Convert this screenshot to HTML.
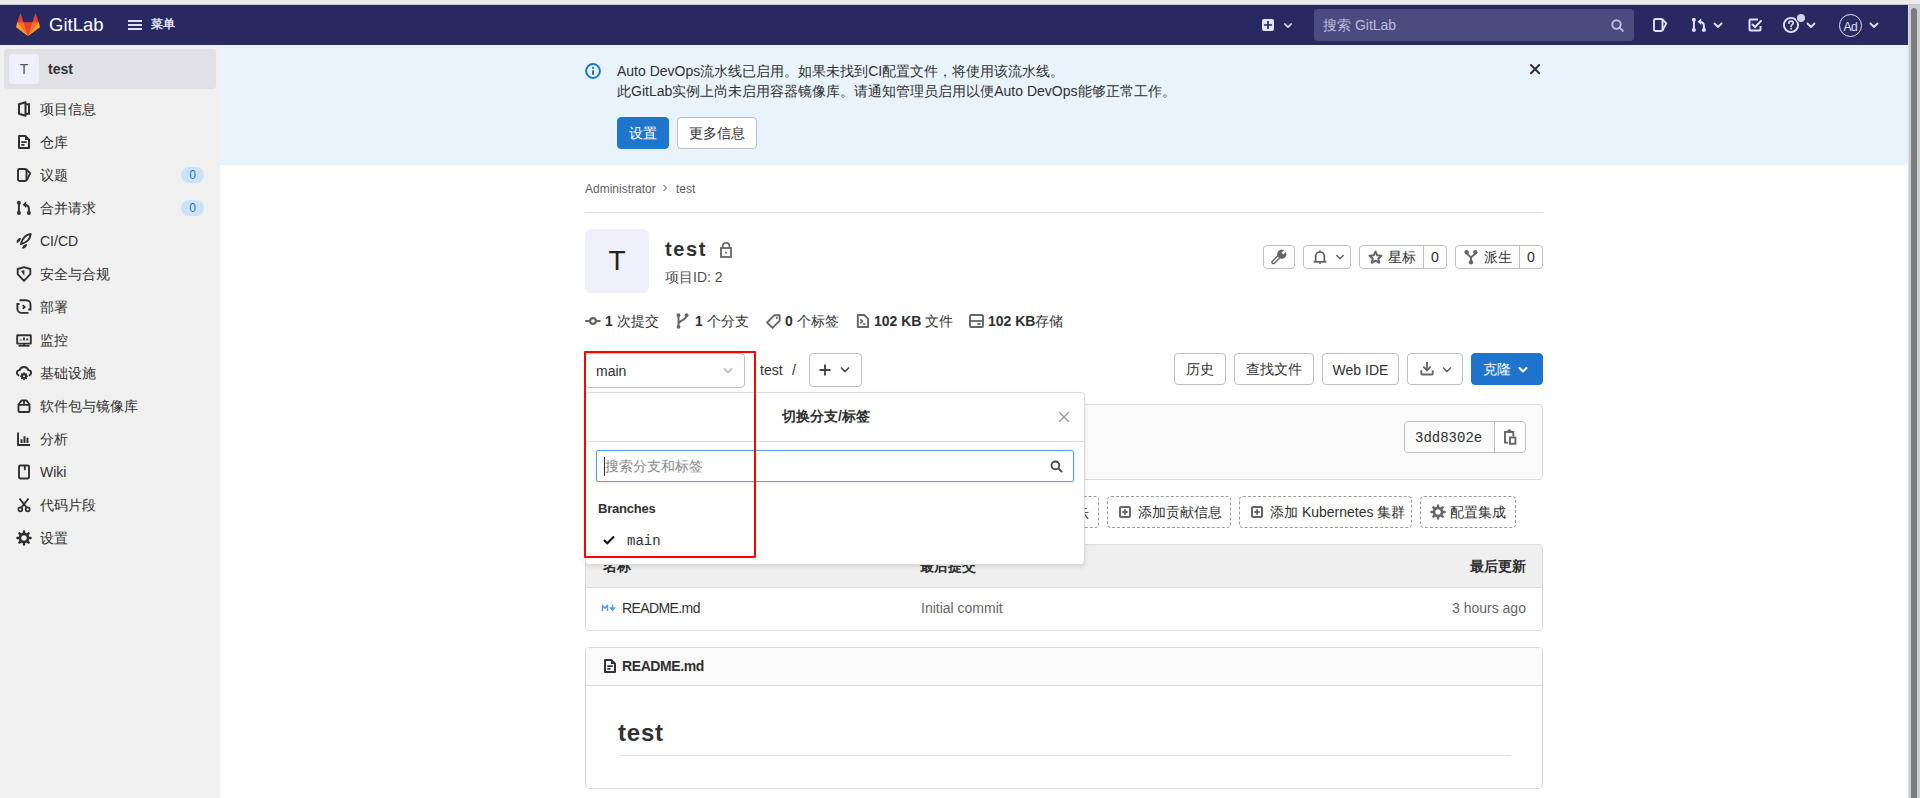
<!DOCTYPE html>
<html><head><meta charset="utf-8">
<style>
*{box-sizing:border-box;margin:0;padding:0}
html,body{width:1920px;height:798px;overflow:hidden;background:#fff}
body{font-family:"Liberation Sans",sans-serif;font-size:14px;color:#303030;position:relative}
.abs{position:absolute}
svg{display:block}
#topstrip{left:0;top:0;width:1920px;height:5px;background:linear-gradient(#ebebe9 0,#ebebe9 3px,#f0f0ee 3px,#f0f0ee 4px,#c8c7c2 4px,#c8c7c2 5px)}
#nav{left:0;top:5px;width:1908px;height:40px;background:#292961}
#scroll{left:1908px;top:4px;width:12px;height:794px;background:#cdd0cf;border-left:1px solid #dcdedd;border-top:1px solid #c4c6c5}
#thumb{left:1911px;top:8px;width:6px;height:800px;background:#7a7e7e;border-radius:3px}
#side{left:0;top:45px;width:220px;height:753px;background:#f0f0f0}
#alert{left:220px;top:45px;width:1688px;height:120px;background:#e9f3fc}
.btn{position:absolute;padding-top:2px;height:32px;border:1px solid #bfbfbf;border-radius:4px;background:#fff;display:flex;align-items:center;justify-content:center;color:#303030;font-size:14px}
.side-item{position:absolute;left:16px;height:20px;display:flex;align-items:center;color:#303030;font-size:14px}
.side-item svg{margin-right:8px}
.badge{position:absolute;left:181px;width:23px;height:16px;border-radius:8px;background:#cbe2f9;color:#1f75cb;font-size:12px;display:flex;align-items:center;justify-content:center}
</style></head><body>
<div id="topstrip" class="abs"></div>
<div id="nav" class="abs"></div>
<!-- NAV -->
<svg class="abs" style="left:16px;top:12.7px" width="24" height="24" viewBox="0 0 36 36">
<path fill="#e24329" d="M2 14l9.38 9v-9l-4-12.28c-.205-.632-1.176-.632-1.38 0z"/>
<path fill="#e24329" d="M34 14l-9.38 9v-9l4-12.28c.205-.632 1.176-.632 1.38 0z"/>
<path fill="#e24329" d="M18,34.38 3,14 33,14 Z"/>
<path fill="#fc6d26" d="M18,34.38 11.38,14 2,14 6,25Z"/>
<path fill="#fc6d26" d="M18,34.38 24.62,14 34,14 30,25Z"/>
<path fill="#fca326" d="M2 14L.1 20.16c-.18.565 0 1.2.5 1.56l17.42 12.66z"/>
<path fill="#fca326" d="M34 14l1.9 6.16c.18.565 0 1.2-.5 1.56L18 34.38z"/>
</svg>
<div class="abs" style="left:49px;top:13.5px;color:#fff;font-size:18.5px;line-height:22px">GitLab</div>
<svg class="abs" style="left:128px;top:20px" width="14" height="10" viewBox="0 0 14 10"><rect x="0" y="0" width="14" height="2" fill="#e1e1f5"/><rect x="0" y="4" width="14" height="2" fill="#e1e1f5"/><rect x="0" y="8" width="14" height="2" fill="#e1e1f5"/></svg>
<div class="abs" style="left:151px;top:15px;color:#e1e1f5;font-size:12px;font-weight:bold;line-height:18px">菜单</div>
<!-- nav right -->
<svg class="abs" style="left:1262px;top:19px" width="12" height="12" viewBox="0 0 12 12"><rect x="0" y="0" width="12" height="12" rx="2" fill="#e1e1f5"/><path d="M6 2v8M2 6h8" stroke="#292961" stroke-width="1.7"/></svg>
<svg class="abs nchev" style="left:1283px;top:21px" width="10" height="8" viewBox="0 0 10 8"><path d="M1.8 3L5 6.1 8.2 3" stroke="#e1e1f5" stroke-width="1.7" fill="none" stroke-linecap="round" stroke-linejoin="round"/></svg>
<div class="abs" style="left:1314px;top:9px;width:320px;height:32px;border-radius:4px;background:#4b4b80"></div>
<div class="abs" style="left:1323px;top:16px;color:#bcbcdc;font-size:14px;line-height:18px">搜索 GitLab</div>
<svg class="abs" style="left:1611px;top:18.5px" width="13" height="13" viewBox="0 0 13 13"><circle cx="5.5" cy="5.5" r="4.2" stroke="#bcbcdc" stroke-width="2" fill="none"/><path d="M8.6 8.6L11.8 11.8" stroke="#bcbcdc" stroke-width="2" stroke-linecap="round"/></svg>
<!-- issues -->
<svg class="abs" style="left:1652px;top:17px" width="16" height="16" viewBox="0 0 16 16" fill="none" stroke="#e1e1f5"><rect x="2" y="2" width="8.5" height="12" rx="1.5" stroke-width="1.9"/><path d="M10.5 2.5L14.3 6.4 10.5 13.5" stroke-width="1.8" stroke-linejoin="round"/></svg>
<!-- MR -->
<svg class="abs" style="left:1691px;top:17px" width="16" height="16" viewBox="0 0 16 16" fill="none" stroke="#e1e1f5" stroke-width="2"><path d="M2.9 3v10"/><path d="M12.9 13V8.6c0-2.1-1.5-3.7-3.6-3.7H8.5"/><path d="M10.2 1.3L6.6 4.7l3.6 3.3z" fill="#e1e1f5" stroke="none"/><circle cx="2.9" cy="2.8" r="2" fill="#e1e1f5" stroke="none"/><circle cx="2.9" cy="12.9" r="2" fill="#e1e1f5" stroke="none"/><circle cx="12.9" cy="12.9" r="2" fill="#e1e1f5" stroke="none"/></svg>
<svg class="abs" style="left:1713px;top:21px" width="10" height="8" viewBox="0 0 10 8"><path d="M1.5 2.5L5 6l3.5-3.5" stroke="#e1e1f5" stroke-width="1.8" fill="none" stroke-linecap="round" stroke-linejoin="round"/></svg>
<!-- todo -->
<svg class="abs" style="left:1747px;top:17px" width="16" height="16" viewBox="0 0 16 16"><path d="M11 2.5H3.5c-.6 0-1 .4-1 1v9c0 .6.4 1 1 1h9c.6 0 1-.4 1-1V9" fill="none" stroke="#e1e1f5" stroke-width="2"/><path d="M5.5 7.5L8 10l6-6" fill="none" stroke="#e1e1f5" stroke-width="2" stroke-linecap="round"/></svg>
<!-- help -->
<svg class="abs" style="left:1782px;top:16px;overflow:visible" width="20" height="20" viewBox="0 0 20 20"><circle cx="9" cy="9" r="7.1" fill="none" stroke="#e1e1f5" stroke-width="1.9"/><path d="M6.9 7.2c0-1.2 1-2.1 2.2-2.1s2.1.9 2.1 2c0 1.5-2.1 1.6-2.1 3.2" fill="none" stroke="#e1e1f5" stroke-width="1.7" stroke-linecap="round"/><circle cx="9.1" cy="12.8" r="1" fill="#e1e1f5"/><circle cx="19" cy="2" r="5" fill="#292961"/><circle cx="19" cy="2" r="4" fill="#d2d2f0"/></svg>
<svg class="abs" style="left:1806px;top:21px" width="10" height="8" viewBox="0 0 10 8"><path d="M1.5 2.5L5 6l3.5-3.5" stroke="#e1e1f5" stroke-width="1.8" fill="none" stroke-linecap="round" stroke-linejoin="round"/></svg>
<!-- avatar -->
<div class="abs" style="left:1838.5px;top:13.5px;width:23.5px;height:23.5px;border-radius:50%;border:1px solid #e1e1f5;color:#e1e1f5;font-size:12px;line-height:24px;text-align:center;letter-spacing:-0.5px">Ad</div>
<svg class="abs" style="left:1869px;top:21px" width="10" height="8" viewBox="0 0 10 8"><path d="M1.5 2.5L5 6l3.5-3.5" stroke="#e1e1f5" stroke-width="1.8" fill="none" stroke-linecap="round" stroke-linejoin="round"/></svg>
<div id="side" class="abs"></div>
<!-- SIDEBAR -->
<div class="abs" style="left:4px;top:49px;width:212px;height:40px;border-radius:4px;background:#e0e0e5"></div>
<div class="abs" style="left:9px;top:54px;width:30px;height:30px;border-radius:4px;background:#f0f0fd;color:#555;font-size:14px;line-height:30px;text-align:center">T</div>
<div class="abs" style="left:48px;top:60px;font-weight:bold;font-size:14px;line-height:18px;color:#303030">test</div>
<svg class="abs" style="left:16px;top:101px" width="16" height="16" viewBox="0 0 16 16" fill="none" stroke="#303030" stroke-width="2"><path d="M3 3.2L9.5 1.3v13.4L3 12.8z" stroke-linejoin="round"/><path d="M10 3.3h3v9.4h-3"/></svg>
<div class="abs" style="left:40px;top:99px;line-height:20px;font-size:14px;color:#303030">项目信息</div>
<svg class="abs" style="left:16px;top:134px" width="16" height="16" viewBox="0 0 16 16" fill="none" stroke="#303030" stroke-width="2"><path d="M3 2h6.3L13 5.7V14H3z" stroke-linejoin="round"/><path d="M5.3 8.2h5.4M5.3 10.8h3.2" stroke-width="1.7"/><path d="M9 1.5L13.5 6H9z" fill="#303030" stroke="none"/></svg>
<div class="abs" style="left:40px;top:132px;line-height:20px;font-size:14px;color:#303030">仓库</div>
<svg class="abs" style="left:16px;top:167px" width="16" height="16" viewBox="0 0 16 16" fill="none" stroke="#303030" stroke-width="2"><rect x="2" y="2" width="8.5" height="12" rx="1.5" stroke-width="1.9"/><path d="M10.5 2.5L14.3 6.4 10.5 13.5" stroke-width="1.8" stroke-linejoin="round"/></svg>
<div class="abs" style="left:40px;top:165px;line-height:20px;font-size:14px;color:#303030">议题</div>
<svg class="abs" style="left:16px;top:200px" width="16" height="16" viewBox="0 0 16 16" fill="none" stroke="#303030" stroke-width="2"><path d="M2.9 3v10"/><path d="M12.9 13V8.6c0-2.1-1.5-3.7-3.6-3.7H8.5"/><path d="M10.2 1.3L6.6 4.7l3.6 3.3z" fill="#303030" stroke="none"/><circle cx="2.9" cy="2.8" r="2" fill="#303030" stroke="none"/><circle cx="2.9" cy="12.9" r="2" fill="#303030" stroke="none"/><circle cx="12.9" cy="12.9" r="2" fill="#303030" stroke="none"/></svg>
<div class="abs" style="left:40px;top:198px;line-height:20px;font-size:14px;color:#303030">合并请求</div>
<svg class="abs" style="left:16px;top:233px" width="16" height="16" viewBox="0 0 16 16" fill="none" stroke="#303030" stroke-width="2"><path d="M14.7 1C10.5 1.4 6.6 4.8 4.7 11.2 11 9.4 14.4 5.6 14.7 1z" stroke-width="1.9" stroke-linejoin="round"/><path d="M1.2 9.3C1.3 7.6 2.6 6 4.3 5.6 3.9 7.2 2.9 8.7 1.2 9.3z" fill="#303030" stroke-width="1.3" stroke-linejoin="round"/><path d="M6.7 15C8.4 14.9 10 13.6 10.4 11.7 8.8 12.1 7.3 13.3 6.7 15z" fill="#303030" stroke-width="1.3" stroke-linejoin="round"/></svg>
<div class="abs" style="left:40px;top:231px;line-height:20px;font-size:14px;color:#303030">CI/CD</div>
<svg class="abs" style="left:16px;top:266px" width="16" height="16" viewBox="0 0 16 16" fill="none" stroke="#303030" stroke-width="2"><path d="M8 1.1L14.3 3V8.2L8 14.9 1.7 8.2V3z" stroke-width="1.9" stroke-linejoin="round"/><path d="M5 4.9L8.4 4v6z" fill="#303030" stroke="none"/></svg>
<div class="abs" style="left:40px;top:264px;line-height:20px;font-size:14px;color:#303030">安全与合规</div>
<svg class="abs" style="left:16px;top:299px" width="16" height="16" viewBox="0 0 16 16" fill="none" stroke="#303030" stroke-width="2"><path d="M3.5 1.3H10.3C12.6 1.3 14.5 3.2 14.5 5.5V10.5H12.3" stroke-width="1.9"/><path d="M3.6 5H1.4V9.7C1.4 12 3.3 13.9 5.6 13.9H12.5" stroke-width="1.9"/><path d="M6.7 6.2L8.7 8 6.7 9.8" stroke-width="1.8"/></svg>
<div class="abs" style="left:40px;top:297px;line-height:20px;font-size:14px;color:#303030">部署</div>
<svg class="abs" style="left:16px;top:332px" width="16" height="16" viewBox="0 0 16 16" fill="none" stroke="#303030" stroke-width="2"><rect x="1.2" y="3.2" width="13.6" height="8.4" rx="0.3" stroke-width="1.9"/><path d="M2.5 13.8h11" stroke-width="1.7"/><path d="M8 11.5v2" stroke-width="1.5"/><path d="M4.7 8.6V7.4M8 8.6V5.5M11.2 8.6V6.5" stroke-width="1.8"/></svg>
<div class="abs" style="left:40px;top:330px;line-height:20px;font-size:14px;color:#303030">监控</div>
<svg class="abs" style="left:16px;top:365px" width="16" height="16" viewBox="0 0 16 16" fill="none" stroke="#303030" stroke-width="2"><path transform="translate(8 0) scale(1.08 1) translate(-8 1)" d="M3.6 9.6C2.4 9.2 1.4 8.2 1.4 6.9c0-1.5 1.1-2.6 2.5-2.7C4.5 2.3 6.1 1 8 1s3.5 1.3 4.1 3.2c1.4.1 2.5 1.2 2.5 2.7 0 1.3-1 2.3-2.2 2.7" stroke-width="1.8"/><path d="M10.00 11.20L11.10 11.20M9.41 12.61L10.19 13.39M8.00 13.20L8.00 14.30M6.59 12.61L5.81 13.39M6.00 11.20L4.90 11.20M6.59 9.79L5.81 9.01M8.00 9.20L8.00 8.10M9.41 9.79L10.19 9.01" stroke-width="1.7" stroke-linecap="round"/><circle cx="8" cy="11.2" r="2" stroke-width="1.9"/></svg>
<div class="abs" style="left:40px;top:363px;line-height:20px;font-size:14px;color:#303030">基础设施</div>
<svg class="abs" style="left:16px;top:398px" width="16" height="16" viewBox="0 0 16 16" fill="none" stroke="#303030" stroke-width="2"><path d="M2.5 6.5L5.5 2.5h5l3 4V13c0 .6-.4 1-1 1h-9c-.6 0-1-.4-1-1z" stroke-width="1.9" stroke-linejoin="round"/><path d="M2.5 6.8h11M8 2.5v4.3" stroke-width="1.8"/></svg>
<div class="abs" style="left:40px;top:396px;line-height:20px;font-size:14px;color:#303030">软件包与镜像库</div>
<svg class="abs" style="left:16px;top:431px" width="16" height="16" viewBox="0 0 16 16" fill="none" stroke="#303030" stroke-width="2"><path d="M2 1.5V14h12" stroke-width="1.9"/><path d="M5.5 12V8.2M8.5 12V5.2M11.5 12V6.8" stroke-width="2"/></svg>
<div class="abs" style="left:40px;top:429px;line-height:20px;font-size:14px;color:#303030">分析</div>
<svg class="abs" style="left:16px;top:464px" width="16" height="16" viewBox="0 0 16 16" fill="none" stroke="#303030" stroke-width="2"><rect x="3" y="1.5" width="10" height="13" rx="1.2" stroke-width="1.9"/><path d="M8.8 2v4.2" stroke-width="1.8"/></svg>
<div class="abs" style="left:40px;top:462px;line-height:20px;font-size:14px;color:#303030">Wiki</div>
<svg class="abs" style="left:16px;top:497px" width="16" height="16" viewBox="0 0 16 16" fill="none" stroke="#303030" stroke-width="2"><circle cx="4.3" cy="12.3" r="2" stroke-width="1.7"/><circle cx="11.7" cy="12.3" r="2" stroke-width="1.7"/><path d="M5.3 10.6L12.5 1.5M10.7 10.6L3.5 1.5" stroke-width="1.8"/></svg>
<div class="abs" style="left:40px;top:495px;line-height:20px;font-size:14px;color:#303030">代码片段</div>
<svg class="abs" style="left:16px;top:530px" width="16" height="16" viewBox="0 0 16 16"><path d="M12.00 8.00L14.60 8.00M10.83 10.83L12.67 12.67M8.00 12.00L8.00 14.60M5.17 10.83L3.33 12.67M4.00 8.00L1.40 8.00M5.17 5.17L3.33 3.33M8.00 4.00L8.00 1.40M10.83 5.17L12.67 3.33" stroke="#303030" stroke-width="2.4" stroke-linecap="round"/><circle cx="8" cy="8" r="4.1" fill="none" stroke="#303030" stroke-width="2.6"/></svg>
<div class="abs" style="left:40px;top:528px;line-height:20px;font-size:14px;color:#303030">设置</div>
<div class="badge" style="top:167px">0</div>
<div class="badge" style="top:200px">0</div>

<div id="alert" class="abs"></div>
<!-- ALERT -->
<svg class="abs" style="left:585px;top:63px" width="16" height="16" viewBox="0 0 16 16"><circle cx="8" cy="8" r="6.9" fill="none" stroke="#1f75cb" stroke-width="2"/><circle cx="8" cy="4.9" r="1.1" fill="#1f75cb"/><path d="M8 7.2v4.6" stroke="#1f75cb" stroke-width="2"/></svg>
<div class="abs" style="left:617px;top:61px;line-height:20px;font-size:14px;color:#303030">Auto DevOps流水线已启用。如果未找到CI配置文件，将使用该流水线。<br>此GitLab实例上尚未启用容器镜像库。请通知管理员启用以便Auto DevOps能够正常工作。</div>
<div class="btn" style="left:617px;top:117px;width:52px;background:#1f75cb;border-color:#1f75cb;color:#fff">设置</div>
<div class="btn" style="left:677px;top:117px;width:80px">更多信息</div>
<svg class="abs" style="left:1529px;top:63px" width="12" height="12" viewBox="0 0 12 12"><path d="M2 2l8.2 8.2M10.2 2l-8.2 8.2" stroke="#303030" stroke-width="2" stroke-linecap="round"/></svg>

<!-- MAIN HEADER -->
<div class="abs" style="left:585px;top:181px;font-size:12px;line-height:16px;color:#5f5f5f">Administrator</div>
<svg class="abs" style="left:662px;top:184px" width="6" height="8" viewBox="0 0 6 8"><path d="M1.5 1l3 3-3 3" stroke="#888" stroke-width="1.1" fill="none"/></svg>
<div class="abs" style="left:676px;top:181px;font-size:12px;line-height:16px;color:#5f5f5f">test</div>
<div class="abs" style="left:585px;top:212px;width:958px;height:1px;background:#dcdcdc"></div>
<div class="abs" style="left:585px;top:229px;width:64px;height:64px;border-radius:6px;background:#f0f0fd;color:#222;font-size:28px;line-height:64px;text-align:center">T</div>
<div class="abs" style="left:665px;top:237px;font-size:20px;line-height:24px;font-weight:bold;color:#303030;letter-spacing:1.6px">test</div>
<svg class="abs" style="left:720px;top:242px" width="12" height="16" viewBox="0 0 12 16"><path d="M2.6 6V4.2C2.6 2.3 4.1.9 6 .9s3.4 1.4 3.4 3.3V6" fill="none" stroke="#666" stroke-width="1.7"/><rect x="1" y="6" width="10" height="9" fill="none" stroke="#666" stroke-width="1.8"/><circle cx="6" cy="10.5" r="1" fill="#666"/></svg>
<div class="abs" style="left:665px;top:268px;font-size:14px;line-height:18px;color:#4f4f4f">项目ID: 2</div>
<!-- stats -->
<svg class="abs" style="left:585px;top:313px" width="16" height="16" viewBox="0 0 16 16"><circle cx="8" cy="8" r="2.9" fill="none" stroke="#666" stroke-width="2.2"/><path d="M0.2 8h4.8M11 8h4.6" stroke="#666" stroke-width="2.2"/></svg>
<div class="abs" style="left:605px;top:312px;font-size:14px;line-height:18px;color:#303030"><b>1</b> 次提交</div>
<svg class="abs" style="left:676px;top:313px" width="14" height="16" viewBox="0 0 14 16"><g fill="#666"><circle cx="2.5" cy="2.2" r="1.9"/><circle cx="2.5" cy="13.8" r="1.9"/><circle cx="10.6" cy="2.2" r="1.9"/></g><path d="M2.5 2.2v11.6M2.5 11c0-4 8.1-3.5 8.1-8.8" stroke="#666" stroke-width="1.9" fill="none"/></svg>
<div class="abs" style="left:695px;top:312px;font-size:14px;line-height:18px;color:#303030"><b>1</b> 个分支</div>
<svg class="abs" style="left:766px;top:314px" width="15" height="15" viewBox="0 0 15 15"><path d="M8.3 1.3h5c.2 0 .4.2.4.4v5L6.5 13.9 1.1 8.5z" fill="none" stroke="#666" stroke-width="1.9" stroke-linejoin="round"/><circle cx="10.9" cy="4.1" r="1.1" fill="#666"/></svg>
<div class="abs" style="left:785px;top:312px;font-size:14px;line-height:18px;color:#303030"><b>0</b> 个标签</div>
<svg class="abs" style="left:856px;top:314px" width="14" height="14" viewBox="0 0 14 14"><path d="M1.9 1h6.4l3.8 3.8v8.1c0 .1-.1.1-.1.1H1.9c-.1 0-.1 0-.1-.1V1.1c0-.1 0-.1.1-.1z" fill="none" stroke="#666" stroke-width="1.9"/><path d="M4.2 5.3l2.2 2-2.2 2M6.9 10h2.5" stroke="#666" stroke-width="1.7" fill="none"/></svg>
<div class="abs" style="left:874px;top:312px;font-size:14px;line-height:18px;color:#303030"><b>102 KB</b> 文件</div>
<svg class="abs" style="left:969px;top:314px" width="15" height="14" viewBox="0 0 15 14"><rect x="1" y="1" width="13" height="12" rx="1.3" fill="none" stroke="#666" stroke-width="1.9"/><path d="M1 7h13" stroke="#666" stroke-width="1.8"/><path d="M8.3 10h3.2" stroke="#666" stroke-width="1.8"/></svg>
<div class="abs" style="left:988px;top:312px;font-size:14px;line-height:18px;color:#303030"><b>102 KB</b>存储</div>
<!-- header buttons -->
<div class="btn" style="left:1263px;top:245px;width:32px;height:24px;padding-top:0"><svg width="16" height="16" viewBox="0 0 16 16"><path d="M2.4 13.2L8 7.6" stroke="#666" stroke-width="4.2" stroke-linecap="round"/><path d="M2.4 13.2L7.4 8.2" stroke="#fff" stroke-width="1.3" stroke-linecap="round"/><path d="M13.0 1.16A4.6 4.6 0 1 0 14.84 3.0L12.29 5.55 10.45 3.71Z" fill="#666"/></svg></div>
<div class="btn" style="left:1303px;top:245px;width:48px;height:24px;padding-top:0;justify-content:flex-start;padding-left:8px"><svg width="16" height="16" viewBox="0 0 16 16"><path d="M3.7 11.8V7.2c0-2.5 1.9-4.4 4.3-4.4s4.3 1.9 4.3 4.4v4.6l1.2 1h-11z" fill="none" stroke="#666" stroke-width="1.8" stroke-linejoin="round"/><circle cx="8" cy="2.2" r="1" fill="#666"/><circle cx="8" cy="13.9" r="1" fill="#666"/></svg><svg style="margin-left:7px" width="10" height="8" viewBox="0 0 10 8"><path d="M1.8 2.5L5 5.7l3.2-3.2" stroke="#666" stroke-width="1.6" fill="none" stroke-linecap="round"/></svg></div>
<div class="btn" style="left:1359px;top:245px;width:88px;height:24px;padding-top:0;justify-content:flex-start">
 <div style="width:64px;height:22px;display:flex;align-items:center;padding-left:8px;border-right:1px solid #bfbfbf"><svg width="15" height="15" viewBox="0 0 16 16"><path d="M8 1.7l1.9 4 4.4.5-3.3 3 .9 4.4L8 11.4l-3.9 2.2.9-4.4-3.3-3 4.4-.5z" fill="none" stroke="#666" stroke-width="2.2" stroke-linejoin="round"/></svg><span style="margin-left:5px;padding-top:2px">星标</span></div>
 <div style="flex:1;text-align:center">0</div></div>
<div class="btn" style="left:1455px;top:245px;width:88px;height:24px;padding-top:0;justify-content:flex-start">
 <div style="width:64px;height:22px;display:flex;align-items:center;padding-left:8px;border-right:1px solid #bfbfbf"><svg width="14" height="16" viewBox="0 0 14 16"><g fill="#666"><circle cx="2.7" cy="3.2" r="2.2"/><circle cx="11.3" cy="3.2" r="2.2"/><circle cx="7" cy="13.3" r="2.2"/></g><path d="M2.7 3.2c0 3.6 4.3 3.4 4.3 6v4.1M11.3 3.2c0 3.6-4.3 3.4-4.3 6" stroke="#666" stroke-width="2" fill="none"/></svg><span style="margin-left:6px;padding-top:2px">派生</span></div>
 <div style="flex:1;text-align:center">0</div></div>
<!-- BRANCH ROW -->
<div class="btn" style="left:585px;top:353px;width:160px;height:35px;justify-content:flex-start;padding-left:10px;padding-top:0">main</div>
<svg class="abs" style="left:723px;top:367px" width="10" height="8" viewBox="0 0 10 8"><path d="M1.5 2L5 5.5 8.5 2" stroke="#bfbfbf" stroke-width="1.9" fill="none" stroke-linecap="round" stroke-linejoin="round"/></svg>
<div class="abs" style="left:760px;top:361px;font-size:14px;line-height:18px;color:#303030">test</div>
<div class="abs" style="left:792px;top:361px;font-size:14px;line-height:18px;color:#303030">/</div>
<div class="btn" style="left:809px;top:353px;width:53px;height:34px"></div>
<svg class="abs" style="left:818px;top:363px" width="14" height="14" viewBox="0 0 14 14"><path d="M7 1.5v11M1.5 7h11" stroke="#444" stroke-width="1.9"/></svg>
<svg class="abs" style="left:840px;top:366px" width="10" height="8" viewBox="0 0 10 8"><path d="M1.5 2L5 5.5 8.5 2" stroke="#444" stroke-width="1.7" fill="none" stroke-linecap="round" stroke-linejoin="round"/></svg>
<div class="btn" style="left:1174px;top:353px;width:52px">历史</div>
<div class="btn" style="left:1234px;top:353px;width:80px">查找文件</div>
<div class="btn" style="left:1322px;top:353px;width:77px">Web IDE</div>
<div class="btn" style="left:1407px;top:353px;width:56px"></div>
<svg class="abs" style="left:1420px;top:362px" width="14" height="14" viewBox="0 0 14 14"><path d="M7 0.5v7.5M3.8 5.2L7 8.4l3.2-3.2" stroke="#666" stroke-width="1.9" fill="none" stroke-linecap="round"/><path d="M1.3 8.3v3.2c0 .6.4 1 1 1h9.4c.6 0 1-.4 1-1V8.3" stroke="#666" stroke-width="1.9" fill="none"/></svg>
<svg class="abs" style="left:1442px;top:366px" width="10" height="8" viewBox="0 0 10 8"><path d="M1.5 2L5 5.5 8.5 2" stroke="#666" stroke-width="1.7" fill="none" stroke-linecap="round" stroke-linejoin="round"/></svg>
<div class="btn" style="left:1471px;top:353px;width:72px;background:#1f75cb;border-color:#1f75cb;color:#fff;justify-content:flex-start;padding-left:11px">克隆</div>
<svg class="abs" style="left:1518px;top:366px" width="10" height="8" viewBox="0 0 10 8"><path d="M1.5 2L5 5.5 8.5 2" stroke="#fff" stroke-width="2" fill="none" stroke-linecap="round" stroke-linejoin="round"/></svg>
<!-- COMMIT BOX -->
<div class="abs" style="left:585px;top:404px;width:958px;height:76px;border:1px solid #dbdbdb;border-radius:4px;background:#fafafa"></div>
<div class="abs" style="left:1404px;top:421px;width:122px;height:32px;border:1px solid #bfbfbf;border-radius:4px;background:#fff;overflow:hidden"><div style="width:90px;height:30px;background:#fafafa;border-right:1px solid #bfbfbf"></div></div>
<div class="abs" style="left:1415px;top:429px;font-family:'Liberation Mono',monospace;font-size:14px;line-height:18px;color:#303030">3dd8302e</div>
<svg class="abs" style="left:1502px;top:429px" width="16" height="16" viewBox="0 0 16 16"><path d="M4.5 3H3v10.6h3" fill="none" stroke="#666" stroke-width="1.9"/><path d="M10 3h1.3v4.6" fill="none" stroke="#666" stroke-width="1.9"/><rect x="4.3" y="1.6" width="6" height="2.4" fill="#666"/><circle cx="7.3" cy="1.6" r="1.4" fill="#666"/><rect x="8" y="8.5" width="5.4" height="6.3" fill="none" stroke="#666" stroke-width="1.9"/></svg>
<!-- DASHED BUTTONS -->
<div class="abs" style="left:1000px;top:496px;width:99px;height:32px;border:1px dashed #999;border-radius:4px"></div>
<div class="abs" style="left:1075px;top:505px;font-size:14px;line-height:18px;color:#303030">示</div>
<div class="abs" style="left:1107px;top:496px;width:124px;height:32px;padding-top:1px;border:1px dashed #999;border-radius:4px;display:flex;align-items:center;padding-left:11px;font-size:14px;color:#303030"><svg style="margin-top:-2px" width="12" height="12" viewBox="0 0 12 12"><rect x="1" y="1" width="10" height="10" rx="1" fill="none" stroke="#666" stroke-width="2"/><path d="M6 3.3v5.4M3.3 6h5.4" stroke="#666" stroke-width="1.8"/></svg><span style="margin-left:7px">添加贡献信息</span></div>
<div class="abs" style="left:1239px;top:496px;width:173px;height:32px;padding-top:1px;border:1px dashed #999;border-radius:4px;display:flex;align-items:center;padding-left:11px;font-size:14px;color:#303030"><svg style="margin-top:-2px" width="12" height="12" viewBox="0 0 12 12"><rect x="1" y="1" width="10" height="10" rx="1" fill="none" stroke="#666" stroke-width="2"/><path d="M6 3.3v5.4M3.3 6h5.4" stroke="#666" stroke-width="1.8"/></svg><span style="margin-left:7px">添加 Kubernetes 集群</span></div>
<div class="abs" style="left:1420px;top:496px;width:96px;height:32px;padding-top:1px;border:1px dashed #999;border-radius:4px;display:flex;align-items:center;padding-left:9px;font-size:14px;color:#303030"><svg style="margin-top:-2px" width="16" height="16" viewBox="0 0 16 16"><path d="M12.00 8.00L14.60 8.00M10.83 10.83L12.67 12.67M8.00 12.00L8.00 14.60M5.17 10.83L3.33 12.67M4.00 8.00L1.40 8.00M5.17 5.17L3.33 3.33M8.00 4.00L8.00 1.40M10.83 5.17L12.67 3.33" stroke="#666" stroke-width="2.4" stroke-linecap="round"/><circle cx="8" cy="8" r="4.1" fill="none" stroke="#666" stroke-width="2.6"/></svg><span style="margin-left:4px">配置集成</span></div>
<!-- TABLE -->
<div class="abs" style="left:585px;top:544px;width:958px;height:87px;border:1px solid #dbdbdb;border-radius:4px;background:#fff;overflow:hidden">
 <div style="height:43px;background:#efefef;border-bottom:1px solid #dbdbdb"></div>
</div>
<div class="abs" style="left:603px;top:557px;font-size:14px;line-height:18px;font-weight:bold;color:#303030">名称</div>
<div class="abs" style="left:920px;top:557px;font-size:14px;line-height:18px;font-weight:bold;color:#303030">最后提交</div>
<div class="abs" style="left:1470px;top:557px;font-size:14px;line-height:18px;font-weight:bold;color:#303030">最后更新</div>
<svg class="abs" style="left:601px;top:603px" width="16" height="10" viewBox="0 0 16 10"><path d="M1.5 8V2.2l2.5 3 2.5-3V8" stroke="#5a9fe5" stroke-width="1.5" fill="none" stroke-linejoin="round"/><path d="M11.5 1.8v5M9.5 5l2 2.5 2-2.5z" stroke="#5a9fe5" stroke-width="1.3" fill="#5a9fe5"/></svg>
<div class="abs" style="left:622px;top:599px;font-size:14px;line-height:18px;color:#303030;letter-spacing:-0.6px">README.md</div>
<div class="abs" style="left:921px;top:599px;font-size:14px;line-height:18px;color:#666">Initial commit</div>
<div class="abs" style="left:1452px;top:599px;font-size:14px;line-height:18px;color:#666">3 hours ago</div>
<!-- README BOX -->
<div class="abs" style="left:585px;top:647px;width:958px;height:142px;border:1px solid #dbdbdb;border-radius:4px;background:#fff;overflow:hidden">
 <div style="height:38px;background:#fafafa;border-bottom:1px solid #dbdbdb"></div>
</div>
<svg class="abs" style="left:602px;top:658px" width="16" height="16" viewBox="0 0 16 16" fill="none" stroke="#303030" stroke-width="2"><path d="M3 2h6.3L13 5.7V14H3z" stroke-linejoin="round"/><path d="M5.3 8.2h5.4M5.3 10.8h3.2" stroke-width="1.7"/><path d="M9 1.5L13.5 6H9z" fill="#303030" stroke="none"/></svg>
<div class="abs" style="left:622px;top:657px;font-size:14px;line-height:18px;font-weight:bold;color:#303030;letter-spacing:-0.4px">README.md</div>
<div class="abs" style="left:618px;top:718px;font-size:24px;line-height:30px;font-weight:bold;color:#303030;letter-spacing:0.8px">test</div>
<div class="abs" style="left:618px;top:755px;width:893px;height:1px;background:#e5e5e5"></div>
<!-- DROPDOWN -->
<div class="abs" style="left:585px;top:392px;width:500px;height:173px;border:1px solid #dbdbdb;border-radius:4px;background:#fff;box-shadow:0 2px 4px rgba(0,0,0,0.1)">
 <div style="height:49px;border-bottom:1px solid #dbdbdb"></div>
</div>
<div class="abs" style="left:782px;top:407px;font-size:14px;line-height:18px;font-weight:bold;color:#303030">切换分支/标签</div>
<svg class="abs" style="left:1058px;top:411px" width="12" height="12" viewBox="0 0 12 12"><path d="M1.3 1.3l9.4 9.4M10.7 1.3l-9.4 9.4" stroke="#999" stroke-width="1.4"/></svg>
<div class="abs" style="left:596px;top:450px;width:478px;height:32px;border:1px solid #5a9fe5;border-radius:2px;box-shadow:0 0 2px 1px rgba(66,143,220,0.12)"></div>
<div class="abs" style="left:604px;top:457px;width:1px;height:19px;background:#303030"></div>
<div class="abs" style="left:605px;top:457px;font-size:14px;line-height:18px;color:#888">搜索分支和标签</div>
<svg class="abs" style="left:1049.5px;top:460px" width="13" height="13" viewBox="0 0 14 14"><circle cx="5.8" cy="5.8" r="4.2" fill="none" stroke="#444" stroke-width="2"/><path d="M9 9l3.5 3.5" stroke="#444" stroke-width="2" stroke-linecap="round"/></svg>
<div class="abs" style="left:598px;top:501px;font-size:13px;line-height:16px;font-weight:bold;color:#303030;letter-spacing:-0.2px">Branches</div>
<svg class="abs" style="left:603px;top:535px" width="12" height="10" viewBox="0 0 12 10"><path d="M1 5l3.3 3.3L11 1.5" stroke="#111" stroke-width="2" fill="none"/></svg>
<div class="abs" style="left:627px;top:532px;font-family:'Liberation Mono',monospace;font-size:14px;line-height:18px;color:#303030">main</div>
<!-- RED BOX -->
<div class="abs" style="left:584px;top:351px;width:172px;height:207px;border:2px solid #ff0000;border-radius:1px"></div>
<div id="scroll" class="abs"></div>
<div id="thumb" class="abs"></div>
</body></html>
